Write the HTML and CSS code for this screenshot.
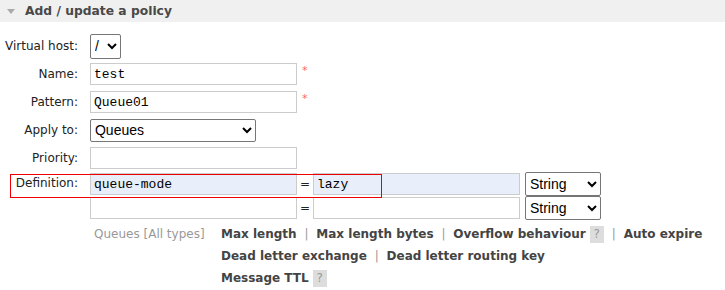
FILE: index.html
```html
<!DOCTYPE html>
<html lang="en">
<head>
  <meta charset="UTF-8">
  <title>Policies</title>
  <link rel="stylesheet" href="styles.css">
</head>
<body>

  <!-- Section header -->
  <div class="section-head">
    <span class="arrow"></span>
    <h2>Add / update a policy</h2>
  </div>

  <!-- Policy form -->
  <table class="form">
    <tr>
      <th>Virtual host:</th>
      <td>
        <select class="vhost"><option>/</option></select>
      </td>
    </tr>
    <tr>
      <th class="right">Name:</th>
      <td><input type="text" class="mono" value="test"><span class="mand">*</span></td>
    </tr>
    <tr>
      <th class="right">Pattern:</th>
      <td><input type="text" class="mono" value="Queue01"><span class="mand">*</span></td>
    </tr>
    <tr>
      <th class="right">Apply to:</th>
      <td>
        <select class="apply"><option>Queues</option></select>
      </td>
    </tr>
    <tr>
      <th class="right">Priority:</th>
      <td><input type="text"></td>
    </tr>
    <tr>
      <th class="right def"><span class="mark"></span>Definition:</th>
      <td>
        <div class="kv">
          <input type="text" class="mono filled" value="queue-mode">
          <span class="eq">=</span>
          <input type="text" class="mono filled" value="lazy">
          <select class="type"><option>String</option></select>
        </div>
        <div class="kv">
          <input type="text" class="mono">
          <span class="eq">=</span>
          <input type="text" class="mono">
          <select class="type"><option>String</option></select>
        </div>
      </td>
    </tr>
  </table>

  <!-- Shortcuts -->
  <div class="shortcuts">
    <span class="group">Queues [All types]</span>
    <div class="links">
      <span class="ln">Max length</span> <i>|</i> <span class="ln">Max length bytes</span> <i>|</i> <span class="ln">Overflow behaviour</span> <span class="help">?</span> <i>|</i> <span class="ln">Auto expire</span><br>
      <span class="ln">Dead letter exchange</span> <i>|</i> <span class="ln">Dead letter routing key</span><br>
      <span class="ln">Message TTL</span> <span class="help">?</span>
    </div>
  </div>

</body>
</html>
```

FILE: styles.css
```css
body {
  margin: 0;
  background: #fff;
  font-family: "DejaVu Sans", Verdana, sans-serif;
  font-size: 12px;
  color: #222;
}

.section-head {
  display: flex;
  align-items: center;
  height: 22px;
  background: #f0f0f0;
  padding-left: 7px;
}

.arrow {
  width: 0;
  height: 0;
  border-left: 4px solid transparent;
  border-right: 4px solid transparent;
  border-top: 5px solid #aaa;
  margin-right: 10px;
}

.section-head h2 {
  margin: 0;
  font-size: 12.3px;
  font-weight: bold;
  color: #484848;
}

.form {
  border-collapse: collapse;
  margin: 10px 0 0 5px;
}

.form th {
  font-weight: normal;
  text-align: left;
  padding: 0 12px 0 0;
  height: 28px;
  vertical-align: middle;
  white-space: nowrap;
}

.form th.right {
  text-align: right;
}

.form td {
  padding: 0;
  vertical-align: middle;
}

.form th.def {
  vertical-align: top;
  padding-top: 4px;
  position: relative;
}

.mark {
  position: absolute;
  z-index: 1;
  left: 5px;
  top: 2px;
  width: 370px;
  height: 22px;
  border: 1px solid #e00;
}

input[type="text"] {
  box-sizing: border-box;
  width: 207px;
  height: 22px;
  border: 1px solid #ccc;
  padding: 1px 3px;
  margin: 0;
  font-family: "DejaVu Sans", Verdana, sans-serif;
  font-size: 12px;
  vertical-align: middle;
}

input.mono {
  font-family: "Liberation Mono", "Courier New", monospace;
  font-size: 13px;
}

input.filled {
  background: #e8eefa;
}

select {
  font-family: Arial, "Liberation Sans", sans-serif;
  font-size: 14px;
  height: 23px;
  border: 1px solid #767676;
  border-radius: 2px;
  background: #fff;
  color: #000;
  margin: 0;
  vertical-align: middle;
}

.vhost {
  width: 31px;
  height: 25px;
}

.apply {
  width: 166px;
}

.mand {
  color: #f66;
  font-size: 11px;
  margin-left: 5px;
  vertical-align: 4px;
}

.kv {
  display: flex;
  align-items: center;
  height: 24px;
}

.eq {
  width: 16px;
  text-align: center;
}

.type {
  width: 76px;
  height: 24px;
  margin-left: 5px;
}

.shortcuts {
  display: flex;
  margin-top: 3px;
  line-height: 22px;
}

.group {
  color: #999;
  width: 221px;
  box-sizing: border-box;
  padding-left: 94px;
  flex: none;
}

.links {
  color: #444;
}

.ln {
  font-weight: bold;
  color: #444;
}

.links i {
  font-style: normal;
  color: #999;
  padding: 0 4px;
}

.help {
  display: inline-block;
  background: #ddd;
  color: #999;
  padding: 0 4px;
  line-height: 17px;
}
```
